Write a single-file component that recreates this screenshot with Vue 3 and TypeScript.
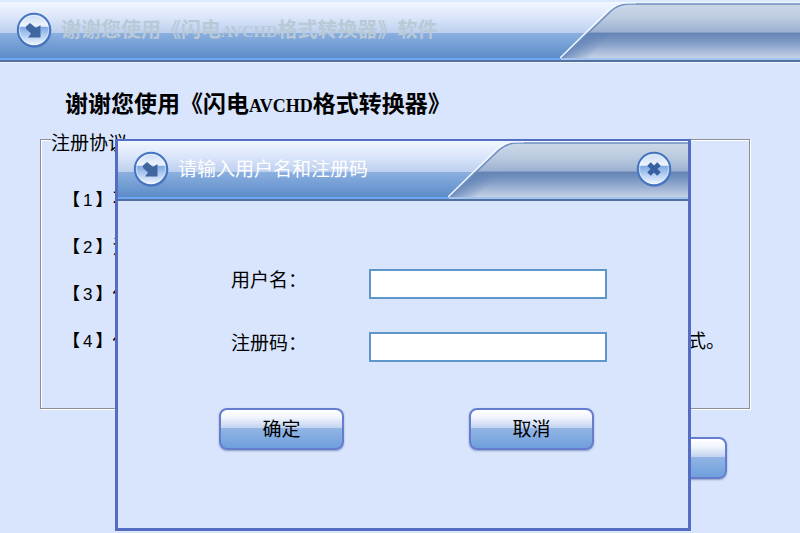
<script setup lang="ts">
import { ref } from 'vue'

interface Term {
  no: number
  start: string
  end?: string
}

const terms: Term[] = [
  { no: 1, start: '不' },
  { no: 2, start: '注' },
  { no: 3, start: '任' },
  { no: 4, start: '任', end: '式。' },
]

const userName = ref('')
const code = ref('')
</script>

<template>
  <div class="page">
    <!-- Shared shapes of the two title bars -->
    <svg class="defs" width="0" height="0" aria-hidden="true">
      <defs>
        <linearGradient id="steel" x1="0" y1="0" x2="0" y2="1">
          <stop offset="0" stop-color="#ccd8e8" />
          <stop offset="0.25" stop-color="#bccbe0" />
          <stop offset="0.51" stop-color="#9cb0d1" />
          <stop offset="0.53" stop-color="#6484b4" />
          <stop offset="0.7" stop-color="#819cc6" />
          <stop offset="1" stop-color="#c9d5e8" />
        </linearGradient>
        <linearGradient id="shade" gradientUnits="userSpaceOnUse" x1="26" y1="28" x2="42" y2="44">
          <stop offset="0" stop-color="#5f82b6" stop-opacity="0.9" />
          <stop offset="1" stop-color="#5f82b6" stop-opacity="0" />
        </linearGradient>
        <linearGradient id="orb" x1="0" y1="0" x2="0" y2="1">
          <stop offset="0" stop-color="#c9daf5" />
          <stop offset="0.38" stop-color="#eef4fd" />
          <stop offset="0.42" stop-color="#80aae4" />
          <stop offset="0.7" stop-color="#b9d2f5" />
          <stop offset="1" stop-color="#f4f9ff" />
        </linearGradient>
        <symbol id="swoosh" viewBox="0 0 240 60">
          <path d="M0 57 L50 9 Q58 2 68 2 L240 2 V57 Z" fill="url(#steel)" />
          <path d="M0 57 L26 31 L60 31 Q42 42 26 57 Z" fill="url(#shade)" />
          <path d="M1 57 L51 9 Q59 2 68 2 L240 2" fill="none" stroke="#6f8fc0" stroke-width="1.6" />
          <path d="M0 56 L49 8 Q56 1 67 0.6 L76 0.6" fill="none" stroke="#f1f7ff" stroke-width="1.6" />
          <rect x="1" y="56" width="239" height="2" fill="#a3c3f0" />
        </symbol>
        <symbol id="ball" viewBox="0 0 36 36">
          <circle cx="18.5" cy="19" r="16.8" fill="#4d6ea8" opacity="0.6" />
          <circle cx="18" cy="18" r="16.2" fill="url(#orb)" stroke="#4474c2" stroke-width="2" />
          <circle cx="18" cy="18" r="14.6" fill="none" stroke="#ffffff" stroke-opacity="0.45" />
        </symbol>
      </defs>
    </svg>

    <header class="bar main-bar">
      <svg class="swoosh"><use href="#swoosh" /></svg>
      <svg class="ball" viewBox="0 0 36 36" aria-hidden="true">
        <use href="#ball" />
        <path d="M10 14.5 L14 11 L20 16 L24.5 13 V25.5 H12 L15 21.5 L10 17 Z" fill="#3f669f" />
      </svg>
      <span class="bar-title faded">谢谢您使用《闪电<span class="latin">AVCHD</span>格式转换器》软件</span>
    </header>

    <main class="content">
      <h1>谢谢您使用《闪电<span class="latin">AVCHD</span>格式转换器》</h1>
      <fieldset>
        <legend>注册协议</legend>
        <ul class="terms">
          <li v-for="t in terms" :key="t.no">
            <span class="marker">【<span class="digit">{{ t.no }}</span>】</span>
            <span>{{ t.start }}</span>
            <span v-if="t.end" class="end">{{ t.end }}</span>
          </li>
        </ul>
      </fieldset>
      <div class="page-actions">
        <button type="button" class="btn" aria-label="注册"></button>
      </div>
    </main>

    <section class="dialog" role="dialog" aria-labelledby="dialog-title">
      <header class="bar">
        <svg class="swoosh"><use href="#swoosh" /></svg>
        <svg class="ball" viewBox="0 0 36 36" aria-hidden="true">
          <use href="#ball" />
          <path d="M10 14.5 L14 11 L20 16 L24.5 13 V25.5 H12 L15 21.5 L10 17 Z" fill="#3f669f" />
        </svg>
        <span id="dialog-title" class="bar-title">请输入用户名和注册码</span>
        <button type="button" class="close" aria-label="关闭">
          <svg class="ball" viewBox="0 0 36 36" aria-hidden="true">
            <use href="#ball" />
            <path d="M13 13 L23 23 M23 13 L13 23" stroke="#38619f" stroke-width="5" />
          </svg>
        </button>
      </header>
      <form @submit.prevent>
        <div class="fields">
          <label for="user">用户名：</label>
          <input id="user" v-model="userName" type="text" />
          <label for="code">注册码：</label>
          <input id="code" v-model="code" type="text" />
        </div>
        <div class="actions">
          <button type="submit" class="btn">确定</button>
          <button type="button" class="btn">取消</button>
        </div>
      </form>
    </section>
  </div>
</template>

<style>
body {
  margin: 0;
  background: #d8e5fc;
}
</style>

<style scoped>
.page {
  position: relative;
  box-sizing: border-box;
  min-height: 100vh;
  overflow: hidden;
  background: #d8e5fc;
  color: #000;
  font: 19px/22px "Liberation Sans", "Noto Sans CJK SC", sans-serif;
}
.defs {
  position: absolute;
}
.bar {
  position: relative;
  display: flex;
  align-items: center;
  gap: 9px;
  box-sizing: border-box;
  height: 60px;
  padding: 0 16px 2px 15px;
  border-bottom: 2px solid #54709f;
  background: linear-gradient(#f2f7ff 0, #dbe6fa 15px, #bccfee 31px, #8bb0e0 31px, #5c8cc8 56px, #6ca8f5 56px);
}
.main-bar {
  height: 62px;
  padding-left: 16px;
  border-top: 2px solid #dce9fe;
  box-shadow: 0 1px #eef4ff;
}
.swoosh {
  position: absolute;
  top: 0;
  right: 0;
  width: 240px;
  height: 60px;
  clip-path: inset(0 0 2px 0);
}
.ball {
  position: relative;
  flex: none;
  display: block;
  width: 36px;
  height: 36px;
}
.bar-title {
  position: relative;
  padding-top: 2px;
  color: #fff;
  white-space: nowrap;
}
.faded {
  color: #b9c9d6;
  font-size: 20px;
  font-weight: bold;
}
.latin {
  font-family: "Liberation Serif", serif;
  font-size: 16px;
}
.close {
  margin-left: auto;
  padding: 0;
  border: 0;
  background: none;
}
.content {
  padding: 28px 50px 0 40px;
}
h1 {
  margin: 0 0 3px 25px;
  font-size: 23px;
  line-height: 29px;
  white-space: nowrap;
}
h1 .latin {
  font-size: 18px;
}
fieldset {
  margin: 0;
  padding: 0 24px 55px 22px;
  border: 1px solid #8d9196;
  box-shadow: 1px 1px #fff, inset 1px 1px #fff;
}
legend {
  margin-left: -12px;
  padding: 9px 0 0;
  background: #d8e5fc;
}
.terms {
  display: grid;
  gap: 25px;
  margin: 0;
  padding: 35px 0 0;
  list-style: none;
}
.terms li {
  display: flex;
}
.marker {
  font-size: 17px;
  font-weight: bold;
}
.digit {
  padding: 0 3px;
  font-weight: normal;
}
.end {
  margin-left: auto;
}
.page-actions {
  display: flex;
  justify-content: flex-end;
  padding: 28px 23px 0 0;
}
.btn {
  box-sizing: border-box;
  width: 125px;
  height: 42px;
  padding: 2px 0 0;
  border: 2px solid #667ccf;
  border-radius: 8px;
  background: linear-gradient(#fff 0, #f0f4fd 20%, #c2d3f0 47%, #92b5e4 48%, #6f9fdc 100%);
  box-shadow: 0 1px 2px #8b9cc0;
  color: #000;
  font: inherit;
}
.dialog {
  position: absolute;
  top: 139px;
  right: 109px;
  left: 115px;
  border: 3px solid #546cc4;
  border-top-width: 2px;
  background: #d8e5fc;
}
form {
  padding: 68px 80px 78px 101px;
}
.fields {
  display: grid;
  grid-template-columns: 138px 238px;
  row-gap: 33px;
  padding-left: 12px;
}
.fields label {
  line-height: 24px;
}
.fields input {
  box-sizing: border-box;
  width: 100%;
  height: 30px;
  padding: 0 6px;
  border: 2px solid #5f97cb;
  background: #fff;
  font: inherit;
}
.actions {
  display: flex;
  gap: 125px;
  padding-top: 46px;
}
</style>
